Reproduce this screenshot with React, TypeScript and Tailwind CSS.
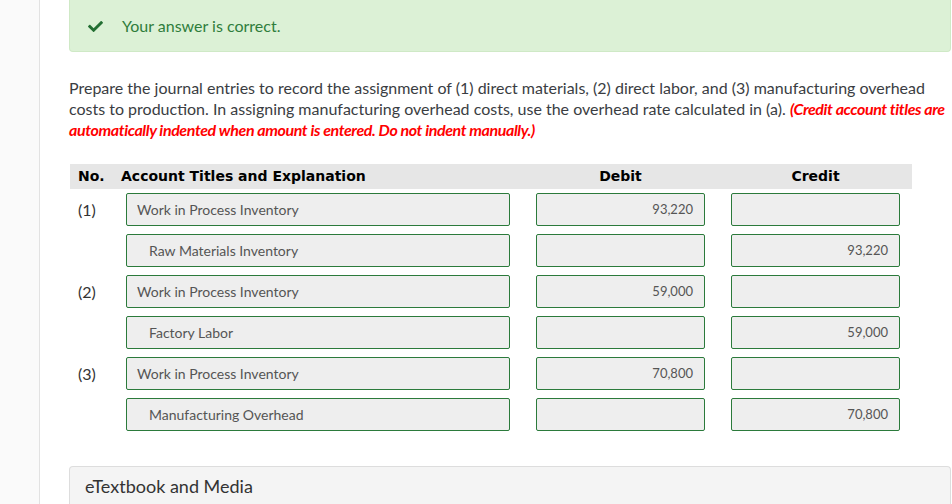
import { FaCheck } from 'react-icons/fa'

const rows = [
  { no: '(1)', title: 'Work in Process Inventory', indent: false, debit: '93,220', credit: '' },
  { no: '', title: 'Raw Materials Inventory', indent: true, debit: '', credit: '93,220' },
  { no: '(2)', title: 'Work in Process Inventory', indent: false, debit: '59,000', credit: '' },
  { no: '', title: 'Factory Labor', indent: true, debit: '', credit: '59,000' },
  { no: '(3)', title: 'Work in Process Inventory', indent: false, debit: '70,800', credit: '' },
  { no: '', title: 'Manufacturing Overhead', indent: true, debit: '', credit: '70,800' },
]

function Field({ value, right, indent }: { value: string; right?: boolean; indent?: boolean }) {
  return (
    <div
      className={
        'flex h-[33px] items-center rounded-[2px] border border-[#2b7a3b] bg-[#eeeeee] text-[#555] ' +
        (right ? 'justify-end pr-[11px] text-[13px]' : indent ? 'pl-[22px] text-[14px]' : 'pl-[10px] text-[14px]')
      }
    >
      {value}
    </div>
  )
}

export default function App() {
  return (
    <div className="flex min-h-[504px] bg-white font-['Lato','Liberation_Sans',sans-serif] text-[#333]">
      <div className="w-[40px] shrink-0 border-r border-[#e2e2e2] bg-[#fafafa]" />
      <main className="w-[912px] pl-[29px] pr-[1px]">
        <div className="flex h-[52px] items-center rounded-b-[4px] border border-t-0 border-[#cfe9c6] bg-[#dcf1d6] pl-[17px] text-[16px] text-[#2f7d3c]">
          <FaCheck className="mt-[1px] h-[15px] w-[17px] text-[#236f33]" />
          <span className="ml-[18px]">Your answer is correct.</span>
        </div>

        <p className="mt-[25px] text-[16px] leading-[21px] text-[#3a3d42]">
          Prepare the journal entries to record the assignment of (1) direct materials, (2) direct labor, and (3) manufacturing overhead
          costs to production. In assigning manufacturing overhead costs, use the overhead rate calculated in (a).{' '}
          <span className="font-bold italic tracking-[-0.4px] text-[#f00]">
            (Credit account titles are automatically indented when amount is entered. Do not indent manually.)
          </span>
        </p>

        <div className="mt-[24px] w-[843px] pl-[1px]">
          <div className="grid h-[25px] grid-cols-[51px_402px_195px_195px] items-center bg-[#e6e6e6] font-['DejaVu_Sans',sans-serif] text-[14px] font-bold text-black">
            <div className="pl-[8px]">No.</div>
            <div>Account Titles and Explanation</div>
            <div className="text-center">Debit</div>
            <div className="text-center">Credit</div>
          </div>
          {rows.map((r, i) => (
            <div key={i} className="grid h-[41px] grid-cols-[51px_402px_195px_195px] items-center">
              <div className="pl-[8px] text-[16px] text-[#333]">{r.no}</div>
              <div className="pl-[5px] pr-[13px]">
                <Field value={r.title} indent={r.indent} />
              </div>
              <div className="flex justify-center">
                <div className="w-[169px]">
                  <Field value={r.debit} right />
                </div>
              </div>
              <div className="flex justify-center">
                <div className="w-[169px]">
                  <Field value={r.credit} right />
                </div>
              </div>
            </div>
          ))}
        </div>

        <div className="mt-[31px] flex h-[40px] items-start rounded-t-[4px] border border-b-0 border-[#dddddd] bg-[#f4f4f4] pl-[15px] pt-[7px] text-[18px] leading-[24px] text-[#333]">
          eTextbook and Media
        </div>
      </main>
    </div>
  )
}
